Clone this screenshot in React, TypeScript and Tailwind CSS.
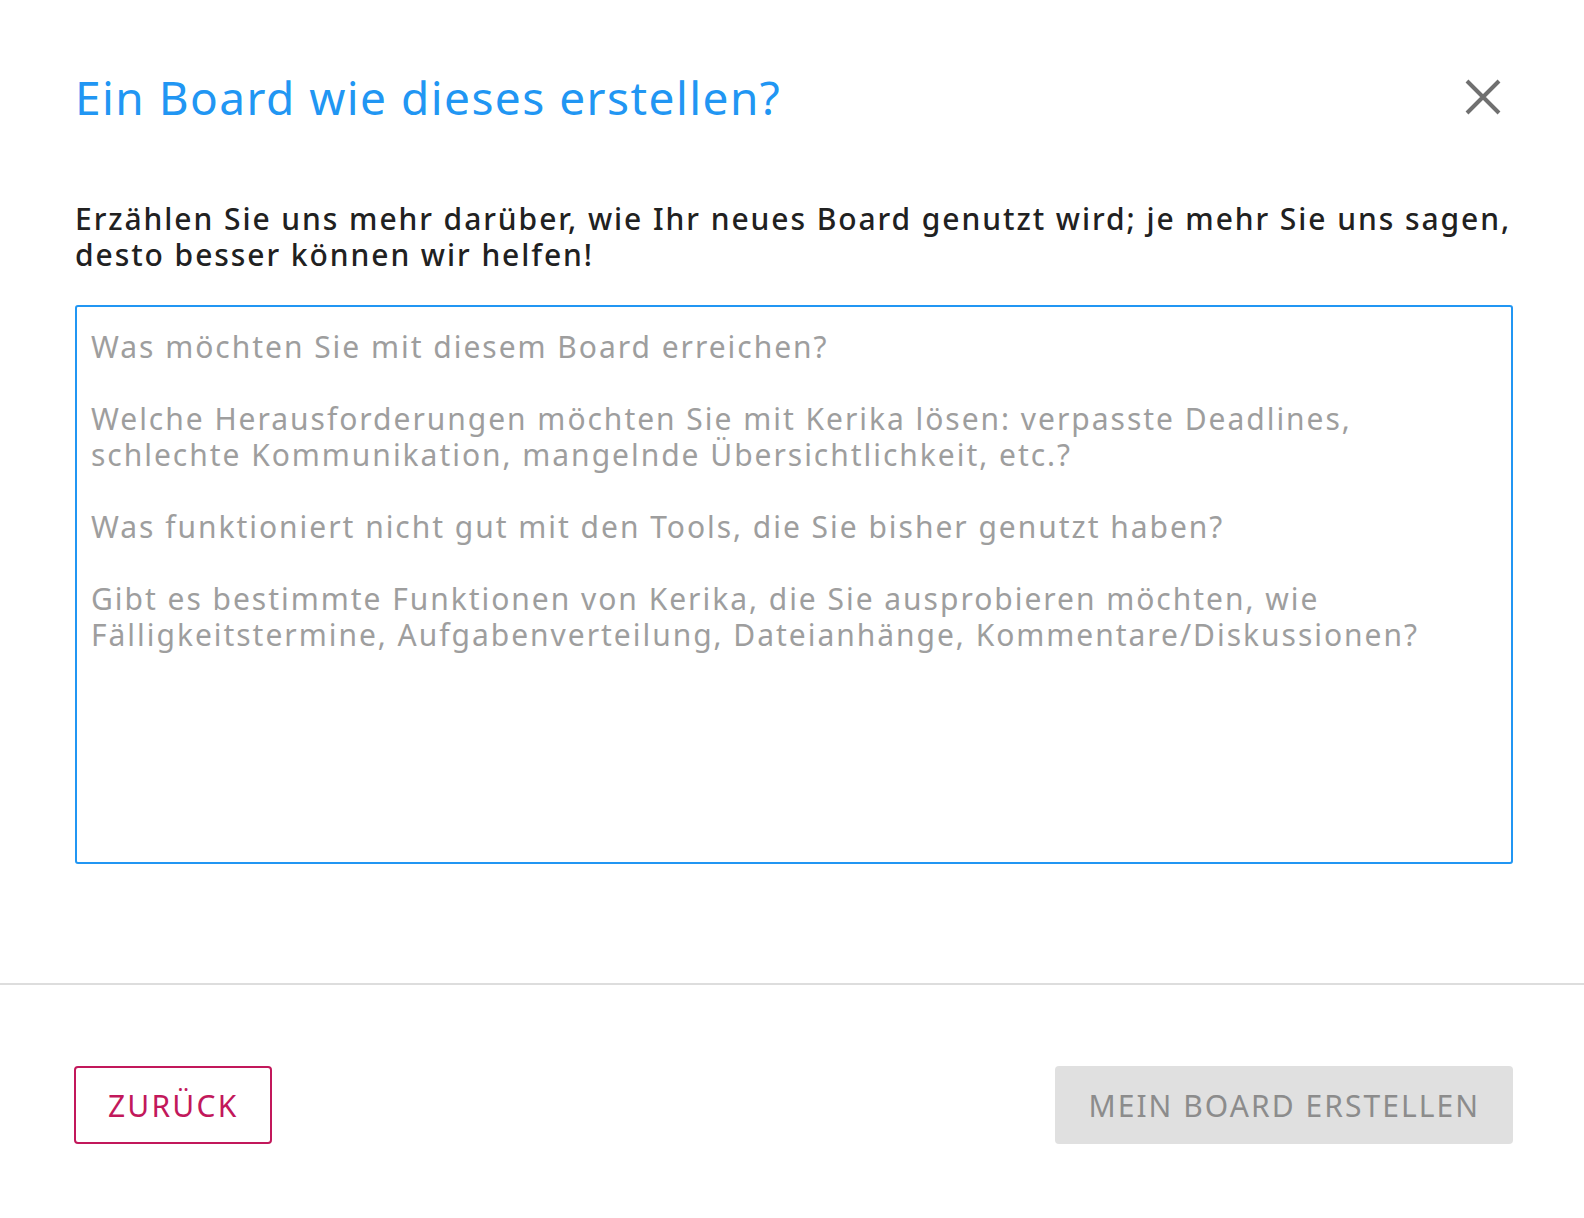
export default function App() {
  return (
    <div className="flex h-[1218px] w-[1584px] flex-col bg-white font-['Noto_Sans',sans-serif]">
      <div className="pl-[75px] pr-[71px] pt-[66px]">
        <div className="flex h-[62px] items-center justify-between">
          <h2 className="text-[46px] leading-none font-normal tracking-[1.45px] text-[#2196f3]">Ein Board wie dieses erstellen?</h2>
          <button className="mr-[12px] flex h-[36px] w-[36px] items-center justify-center text-[#707070]" aria-label="Schließen">
            <svg viewBox="0 0 36 36" className="h-[36px] w-[36px]" fill="none" stroke="currentColor" strokeWidth="4">
              <path d="M2 2 L34 34 M34 2 L2 34" />
            </svg>
          </button>
        </div>

        <p className="mt-[73px] text-[30px] leading-[36px] font-medium tracking-[1.93px] text-[#212121]">
          Erzählen Sie uns mehr darüber, wie Ihr neues Board genutzt wird; je mehr Sie uns sagen, desto besser können wir helfen!
        </p>

        <textarea
          className="mt-[32px] block h-[559px] w-full resize-none rounded-[3px] border-2 border-[#2196f3] px-[14px] pt-[22px] text-[30px] leading-[36px] tracking-[1.97px] text-[#212121] outline-none placeholder:text-[#9e9e9e]"
          placeholder={
            'Was möchten Sie mit diesem Board erreichen?\n\nWelche Herausforderungen möchten Sie mit Kerika lösen: verpasste Deadlines, schlechte Kommunikation, mangelnde Übersichtlichkeit, etc.?\n\nWas funktioniert nicht gut mit den Tools, die Sie bisher genutzt haben?\n\nGibt es bestimmte Funktionen von Kerika, die Sie ausprobieren möchten, wie Fälligkeitstermine, Aufgabenverteilung, Dateianhänge, Kommentare/Diskussionen?'
          }
        />
      </div>

      <div className="mt-[119px] h-[2px] w-full bg-[#dddddd]" />

      <div className="flex items-center justify-between pl-[74px] pr-[71px] pt-[81px]">
        <button className="h-[78px] rounded-[4px] border-2 border-[#c2185b] px-[32px] text-[30px] tracking-[2.2px] text-[#c2185b]">
          ZURÜCK
        </button>
        <button className="h-[78px] rounded-[4px] bg-[#e0e0e0] px-[33px] text-[30px] tracking-[2.05px] text-[#8c8c8c]">
          MEIN BOARD ERSTELLEN
        </button>
      </div>
    </div>
  );
}
